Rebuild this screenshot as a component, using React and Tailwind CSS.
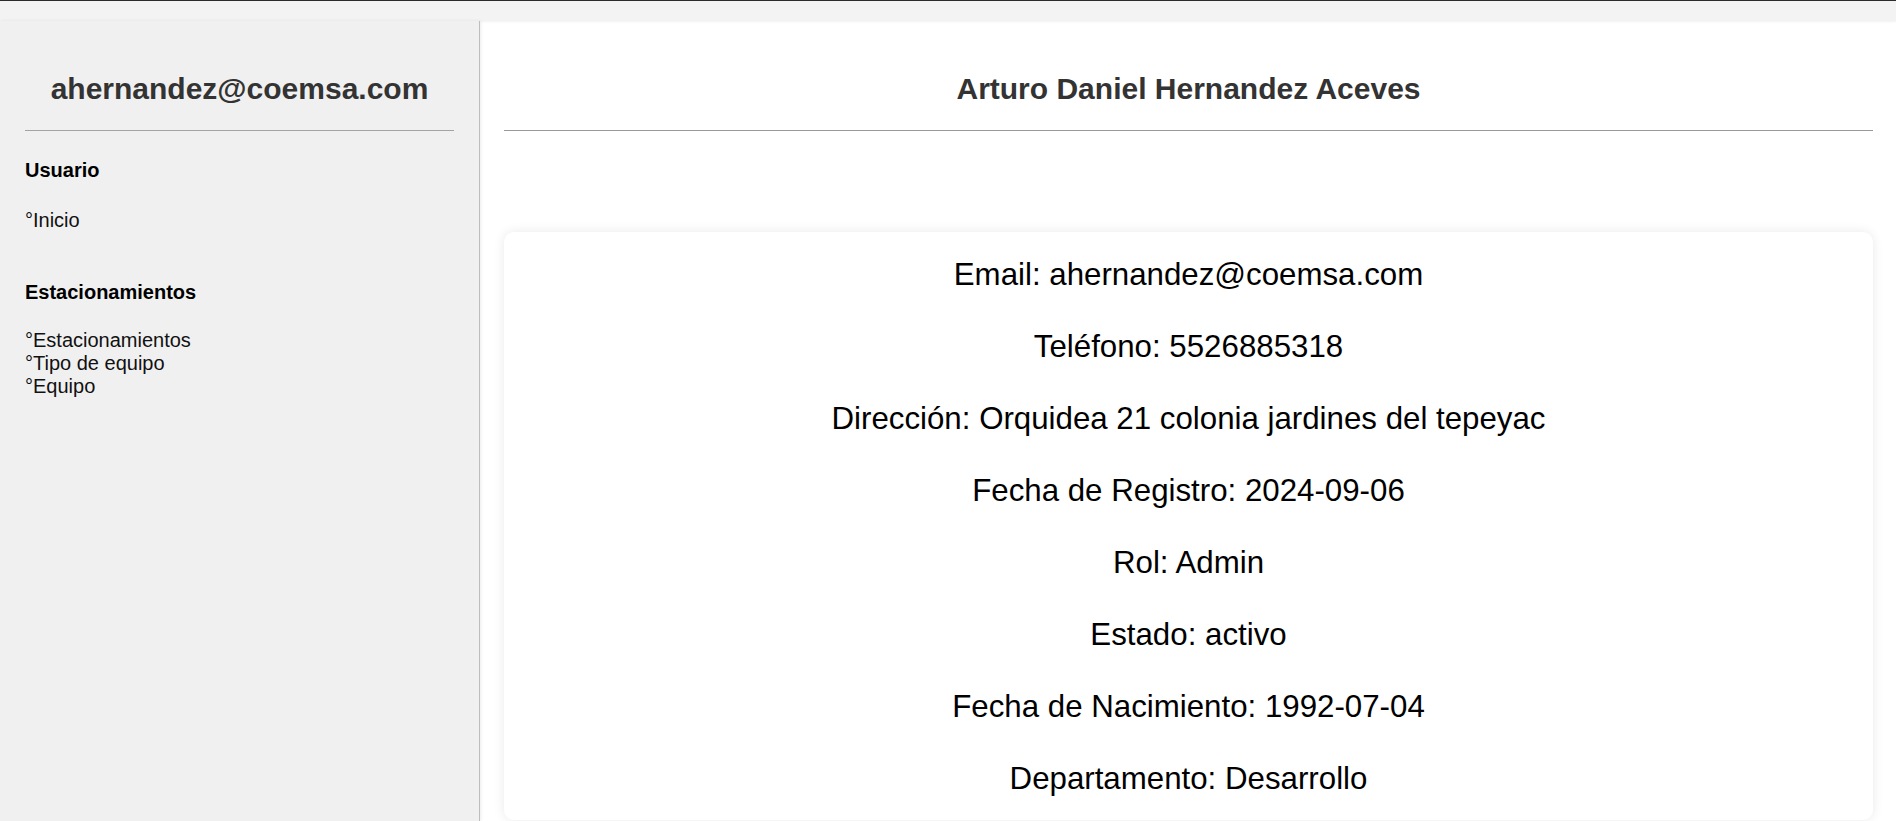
export default function App() {
  const datos = [
    ['Email', 'ahernandez@coemsa.com'],
    ['Teléfono', '5526885318'],
    ['Dirección', 'Orquidea 21 colonia jardines del tepeyac'],
    ['Fecha de Registro', '2024-09-06'],
    ['Rol', 'Admin'],
    ['Estado', 'activo'],
    ['Fecha de Nacimiento', '1992-07-04'],
    ['Departamento', 'Desarrollo'],
  ]

  return (
    <div className="min-h-screen flex flex-col bg-white font-['Liberation_Sans',Arial,sans-serif]">
      {/* Barra superior */}
      <div className="h-[21px] shrink-0 border-t border-[#2b2b2b] bg-[#f3f3f3] shadow-[0_1px_2px_rgba(0,0,0,0.06)]"></div>

      <div className="flex flex-1">
        {/* Sidebar */}
        <aside className="w-[480px] shrink-0 bg-[#f0f0f0] border-r border-[#bdbdbd] shadow-[1px_0_3px_rgba(0,0,0,0.08)] px-[25px] pt-[50px]">
          <h2 className="text-[30px] leading-[36px] font-bold text-[#333] text-center">ahernandez@coemsa.com</h2>
          <div className="mt-[23px] h-px bg-[#a3a3a3]"></div>

          <h3 className="mt-[28px] text-[20px] leading-[23px] font-bold text-black">Usuario</h3>
          <div className="mt-[27px] text-[20px] leading-[23px] text-[#111]">°Inicio</div>

          <h3 className="mt-[49px] text-[20px] leading-[23px] font-bold text-black">Estacionamientos</h3>
          <ul className="mt-[25px] text-[20px] leading-[23px] text-[#111]">
            <li>°Estacionamientos</li>
            <li>°Tipo de equipo</li>
            <li>°Equipo</li>
          </ul>
        </aside>

        {/* Contenido */}
        <main className="flex-1 pl-[24px] pr-[23px] pt-[50px]">
          <h2 className="text-[30px] leading-[36px] font-bold text-[#333] text-center">Arturo Daniel Hernandez Aceves</h2>
          <div className="mt-[23px] h-px bg-[#999]"></div>

          <div className="mt-[101px] bg-white rounded-[10px] shadow-[0_0_12px_rgba(0,0,0,0.09)] pt-[25px] pb-[23px] flex flex-col gap-[36px]">
            {datos.map(([k, v]) => (
              <p key={k} className="text-[31.25px] leading-[36px] text-black text-center">
                {k}: {v}
              </p>
            ))}
          </div>
        </main>
      </div>
    </div>
  )
}
